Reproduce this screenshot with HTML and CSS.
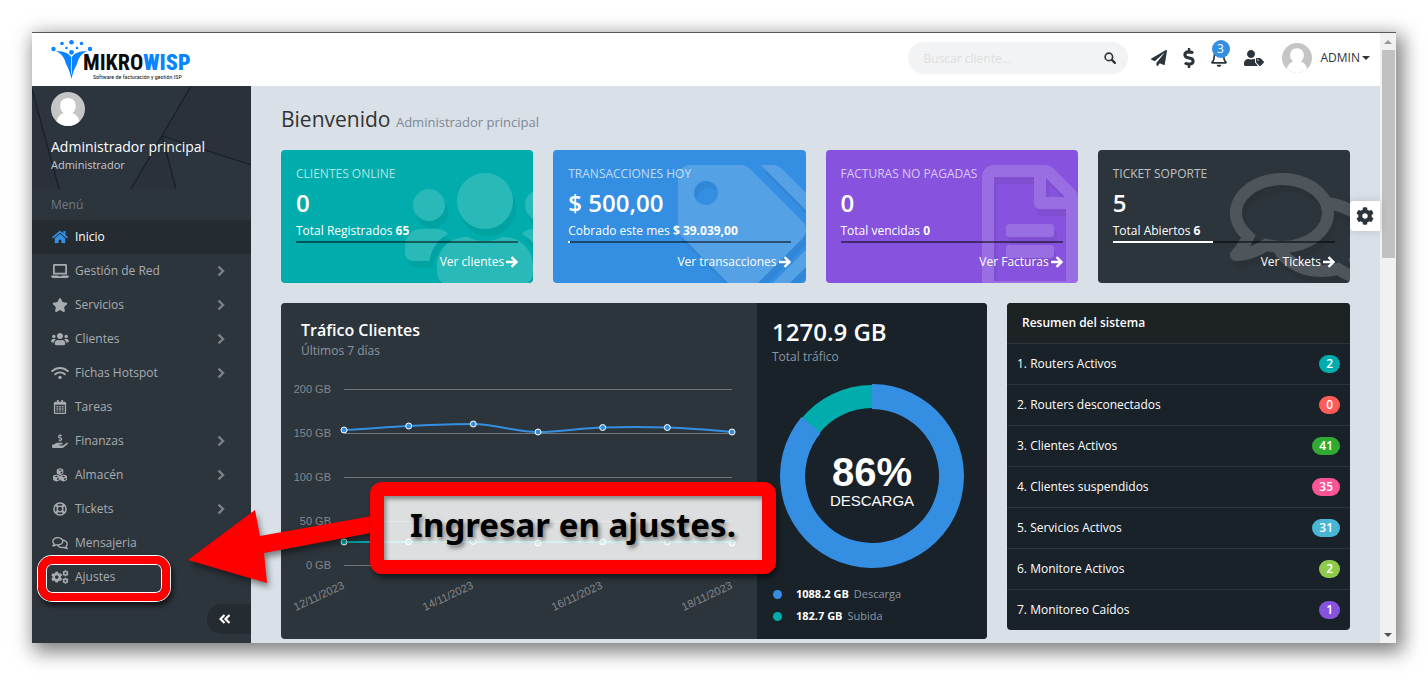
FILE: index.html
```html
<!DOCTYPE html>
<html lang="es">
<head>
<meta charset="utf-8">
<meta name="viewport" content="width=device-width, initial-scale=1">
<title>Mikrowisp</title>
<link rel="stylesheet" href="styles.css">
</head>
<body>
<svg class="sprite" aria-hidden="true">
  <symbol id="home" viewBox="0 0 576 512"><path d="M280.37 148.26L96 300.11V464a16 16 0 0 0 16 16l112.06-.29a16 16 0 0 0 15.92-16V368a16 16 0 0 1 16-16h64a16 16 0 0 1 16 16v95.64a16 16 0 0 0 16 16.05L464 480a16 16 0 0 0 16-16V300L295.67 148.26a12.19 12.19 0 0 0-15.3 0zM571.6 251.47L488 182.56V44.05a12 12 0 0 0-12-12h-56a12 12 0 0 0-12 12v72.61L318.47 43a48 48 0 0 0-61 0L4.34 251.47a12 12 0 0 0-1.6 16.9l25.5 31A12 12 0 0 0 45.15 301l235.22-193.74a12.19 12.19 0 0 1 15.3 0L530.9 301a12 12 0 0 0 16.9-1.6l25.5-31a12 12 0 0 0-1.7-16.93z"/></symbol>
  <symbol id="laptop" viewBox="0 0 640 512"><path d="M624 416H381.54c-.74 19.81-14.71 32-32.74 32H288c-18.69 0-33.02-17.47-32.77-32H16c-8.8 0-16 7.2-16 16v16c0 35.2 28.8 64 64 64h512c35.2 0 64-28.8 64-64v-16c0-8.8-7.2-16-16-16zM576 48c0-26.4-21.6-48-48-48H112C85.6 0 64 21.6 64 48v336h512V48zm-64 272H128V64h384v256z"/></symbol>
  <symbol id="star" viewBox="0 0 576 512"><path d="M259.3 17.8L194 150.2 47.9 171.5c-26.2 3.8-36.7 36.1-17.7 54.6l105.7 103-25 145.5c-4.5 26.3 23.2 46 46.4 33.7L288 439.6l130.7 68.7c23.2 12.2 50.9-7.4 46.4-33.7l-25-145.5 105.7-103c19-18.5 8.5-50.8-17.7-54.6L382 150.2 316.7 17.8c-11.7-23.6-45.6-23.9-57.4 0z"/></symbol>
  <symbol id="users" viewBox="0 0 640 512"><path d="M96 224c35.3 0 64-28.7 64-64s-28.7-64-64-64-64 28.7-64 64 28.7 64 64 64zm448 0c35.3 0 64-28.7 64-64s-28.7-64-64-64-64 28.7-64 64 28.7 64 64 64zm32 32h-64c-17.6 0-33.5 7.1-45.1 18.6 40.3 22.1 68.9 62 75.1 109.4h66c17.7 0 32-14.3 32-32v-32c0-35.3-28.7-64-64-64zm-256 0c61.9 0 112-50.1 112-112S381.9 32 320 32 208 82.1 208 144s50.1 112 112 112zm76.8 32h-8.3c-20.8 10-43.9 16-68.5 16s-47.6-6-68.5-16h-8.3C179.6 288 128 339.6 128 403.2V432c0 26.5 21.5 48 48 48h288c26.5 0 48-21.5 48-48v-28.8c0-63.6-51.6-115.2-115.2-115.2zm-223.7-13.4C161.5 263.1 145.6 256 128 256H64c-35.3 0-64 28.7-64 64v32c0 17.7 14.3 32 32 32h65.9c6.3-47.4 34.9-87.3 75.2-109.4z"/></symbol>
  <symbol id="wifi" viewBox="0 0 640 512"><g fill="none" stroke="currentColor" stroke-width="72" stroke-linecap="round"><path d="M36 186C200 32 440 32 604 186"/><path d="M142 302c102-92 254-92 356 0"/></g><circle cx="320" cy="416" r="62"/></symbol>
  <symbol id="calendar" viewBox="0 0 448 512"><path fill-rule="evenodd" d="M48 64h64V12q0-12 12-12h40q12 0 12 12v52h96V12q0-12 12-12h40q12 0 12 12v52h64q48 0 48 48v352q0 48-48 48H48q-48 0-48-48V112q0-48 48-48zm0 112v288h352V176z"/><path d="M96 220h64v56H96zM192 220h64v56h-64zM288 220h64v56h-64zM96 300h64v56H96zM192 300h64v56h-64zM288 300h64v56h-64zM96 380h64v44H96zM192 380h64v44h-64zM288 380h64v44h-64z"/></symbol>
  <symbol id="dollar" viewBox="0 0 288 512"><path d="M209.2 233.4l-108-31.6C88.7 198.2 80 186.5 80 173.5c0-16.3 13.2-29.5 29.5-29.5h66.3c12.2 0 24.2 3.7 34.2 10.5 6.1 4.1 14.3 3.1 19.5-2l34.8-34c7.1-6.9 6.1-18.4-1.8-24.5C238 74.8 207.4 64.1 176 64V16c0-8.8-7.2-16-16-16h-32c-8.8 0-16 7.2-16 16v48h-2.5C45.8 64-5.4 118.7.5 183.6c4.2 46.1 39.4 83.6 83.8 96.6l102.5 30c12.5 3.7 21.2 15.3 21.2 28.3 0 16.3-13.2 29.5-29.5 29.5h-66.3C100 368 88 364.3 78 357.5c-6.1-4.1-14.3-3.1-19.5 2l-34.8 34c-7.1 6.9-6.1 18.4 1.8 24.5 24.5 19.2 55.1 29.9 86.5 30v48c0 8.8 7.2 16 16 16h32c8.8 0 16-7.2 16-16v-48.2c46.6-.9 90.3-28.6 105.7-72.7 21.5-61.6-14.6-124.8-72.5-141.7z"/></symbol>
  <symbol id="hand" viewBox="0 0 576 512"><use href="#dollar" x="212" y="0" width="160" height="284"/><path d="M565.3 328.1c-11.8-10.7-30.2-10-42.6 0L430.3 402c-11.3 9.1-25.4 14-40 14H272c-8.8 0-16-7.2-16-16s7.2-16 16-16h78.3c15.9 0 30.7-10.9 33.3-26.6 3.3-20-12.1-37.4-31.6-37.4H192c-27 0-53.1 9.3-74.1 26.3L71.4 384H16c-8.8 0-16 7.2-16 16v96c0 8.8 7.2 16 16 16h356.8c14.5 0 28.6-4.9 40-14L564 377c15.2-12.1 16.4-35.3 1.3-48.9z"/></symbol>
  <symbol id="cube" viewBox="0 0 260 272"><path fill-rule="evenodd" d="M118 5q12-5 24 0l98 38q18 7 18 26v120q0 18-16 26l-98 49q-14 7-28 0l-98-49Q2 207 2 189V69q0-19 18-26zM130 50L60 76l70 28 70-28zm22 166l64-32v-58l-64 26z"/></symbol>
  <symbol id="cubes" viewBox="0 0 512 512"><use href="#cube" x="128" y="0" width="256" height="268"/><use href="#cube" x="0" y="236" width="256" height="268"/><use href="#cube" x="256" y="236" width="256" height="268"/></symbol>
  <symbol id="ring" viewBox="0 0 512 512"><g fill="none" stroke="currentColor"><circle cx="256" cy="256" r="220" stroke-width="56"/><circle cx="256" cy="256" r="104" stroke-width="52"/><path stroke-width="84" d="M100 100l78 78M412 100l-78 78M100 412l78-78M412 412l-78-78"/></g></symbol>
  <symbol id="comments" viewBox="0 0 576 512"><path d="M532 386.2c27.5-27.1 44-61.1 44-98.2 0-80-76.5-146.1-176.2-157.9C368.3 72.5 294.3 32 208 32 93.1 32 0 103.6 0 192c0 37 16.5 71 44 98.2-15.3 30.7-37.3 54.5-37.7 54.9-6.3 6.7-8.1 16.5-4.4 25 3.6 8.5 12 14 21.2 14 53.5 0 96.7-20.2 125.2-38.8 9.2 2.1 18.7 3.7 28.4 4.9C208.1 407.6 281.8 448 368 448c20.8 0 40.8-2.4 59.8-6.8C456.3 459.7 499.4 480 553 480c9.2 0 17.5-5.5 21.2-14 3.6-8.5 1.9-18.3-4.4-25-.4-.3-22.5-24.1-37.8-54.8zm-392.8-92.3L122.1 305c-14.1 9.1-28.5 16.3-43.1 21.4 2.7-4.7 5.4-9.7 8-14.8l15.5-31.1L77.7 256C64.2 242.6 48 220.7 48 192c0-60.7 73.3-112 160-112s160 51.3 160 112-73.3 112-160 112c-16.5 0-33-1.9-49-5.6l-19.8-4.5zM498.3 352l-24.7 24.4 15.5 31.1c2.6 5.1 5.3 10.1 8 14.8-14.6-5.1-29-12.3-43.1-21.4l-17.1-11.1-19.9 4.6c-16 3.7-32.5 5.6-49 5.6-54 0-102.2-20.1-131.3-49.7C338 339.5 416 272.9 416 192c0-3.4-.4-6.7-.7-10C479.7 196.5 528 238.8 528 288c0 28.7-16.2 50.6-29.7 64z"/></symbol>
  <symbol id="cog" viewBox="0 0 512 512"><path d="M487.4 315.7l-42.6-24.6c4.3-23.2 4.3-47 0-70.2l42.6-24.6c4.9-2.8 7.1-8.6 5.5-14-11.1-35.6-30-67.8-54.7-94.6-3.8-4.1-10-5.1-14.8-2.3L380.8 110c-17.9-15.4-38.5-27.3-60.8-35.1V25.8c0-5.6-3.9-10.5-9.4-11.7-36.7-8.2-74.3-7.8-109.2 0-5.5 1.2-9.4 6.1-9.4 11.7V75c-22.2 7.9-42.8 19.8-60.8 35.1L88.7 85.5c-4.9-2.8-11-1.9-14.8 2.3-24.7 26.7-43.6 58.9-54.7 94.6-1.7 5.4.6 11.2 5.5 14L67.3 221c-4.3 23.2-4.3 47 0 70.2l-42.6 24.6c-4.9 2.8-7.1 8.6-5.5 14 11.1 35.6 30 67.8 54.7 94.6 3.8 4.1 10 5.1 14.8 2.3l42.6-24.6c17.9 15.4 38.5 27.3 60.8 35.1v49.2c0 5.6 3.9 10.5 9.4 11.7 36.7 8.2 74.3 7.8 109.2 0 5.5-1.2 9.4-6.1 9.4-11.7v-49.2c22.2-7.9 42.8-19.8 60.8-35.1l42.6 24.6c4.9 2.8 11 1.9 14.8-2.3 24.7-26.7 43.6-58.9 54.7-94.6 1.5-5.5-.7-11.3-5.6-14.1zM256 336c-44.1 0-80-35.9-80-80s35.9-80 80-80 80 35.9 80 80-35.9 80-80 80z"/></symbol>
  <symbol id="cogs" viewBox="0 0 640 512"><use href="#cog" x="-10" y="50" width="420" height="420"/><use href="#cog" x="400" y="0" width="240" height="240"/><use href="#cog" x="400" y="270" width="240" height="240"/></symbol>
  <symbol id="plane" viewBox="0 0 512 512"><path d="M476 3.2L12.5 270.6c-18.1 10.4-15.8 35.6 2.2 43.2L121 358.4l287.3-253.2c5.5-4.9 13.3 2.6 8.6 8.3L176 407v80.5c0 23.6 28.5 32.9 42.5 15.8L282 426l124.6 52.2c14.2 6 30.4-2.9 33-18.2l72-432C515 7.8 493.3-6.8 476 3.2z"/></symbol>
  <symbol id="bell" viewBox="0 0 448 512"><path d="M439.39 362.29c-19.32-20.76-55.47-51.99-55.47-154.29 0-77.7-54.48-139.9-127.94-155.16V32c0-17.67-14.32-32-31.98-32s-31.98 14.33-31.98 32v20.84C118.56 68.1 64.08 130.3 64.08 208c0 102.3-36.15 133.53-55.47 154.29-6 6.45-8.66 14.16-8.61 21.71.11 16.4 12.98 32 32.1 32h383.8c19.12 0 32-15.6 32.1-32 .05-7.55-2.61-15.27-8.61-21.71zM67.53 368c21.22-27.97 44.42-74.33 44.53-159.42 0-.2-.06-.38-.06-.58 0-61.86 50.14-112 112-112s112 50.14 112 112c0 .2-.06.38-.06.58.11 85.1 23.31 131.46 44.53 159.42H67.53zM224 512c35.32 0 63.97-28.65 63.97-64H160.03c0 35.35 28.65 64 63.97 64z"/></symbol>
  <symbol id="usertag" viewBox="0 0 640 512"><path d="M630.6 364.9l-90.3-90.2c-12-12-28.3-18.7-45.3-18.7h-79.3c-17.7 0-32 14.3-32 32v79.2c0 17 6.7 33.2 18.7 45.2l90.3 90.2c12.5 12.5 32.8 12.5 45.3 0l92.5-92.5c12.6-12.5 12.6-32.7.1-45.2zm-182.8-21c-13.3 0-24-10.7-24-24s10.7-24 24-24 24 10.7 24 24c0 13.2-10.7 24-24 24zm-223.8-88c70.7 0 128-57.3 128-128C352 57.3 294.7 0 224 0S96 57.3 96 128c0 70.6 57.3 127.9 128 127.9zm127.8 111.2V294c-12.2-3.6-24.9-6.2-38.2-6.2h-16.7c-22.2 10.2-46.9 16-72.9 16s-50.6-5.8-72.9-16h-16.7C60.2 287.9 0 348.1 0 422.3v41.6c0 26.5 21.5 48 48 48h352c15.5 0 29.1-7.5 37.9-18.9l-58-58c-18.1-18.1-28.1-42.2-28.1-67.9z"/></symbol>
  <symbol id="tags" viewBox="0 0 640 512"><path d="M497.941 225.941L286.059 14.059A48 48 0 0 0 252.118 0H48C21.49 0 0 21.49 0 48v204.118a48 48 0 0 0 14.059 33.941l211.882 211.882c18.744 18.745 49.136 18.746 67.882 0l204.118-204.118c18.745-18.745 18.745-49.137 0-67.882zM112 160c-26.51 0-48-21.49-48-48s21.49-48 48-48 48 21.49 48 48-21.49 48-48 48zm513.941 133.823L421.823 497.941c-18.745 18.745-49.137 18.745-67.882 0l-.36-.36L527.64 323.522c16.999-16.999 26.36-39.6 26.36-63.64s-9.362-46.641-26.36-63.64L331.397 0h48.721a48 48 0 0 1 33.941 14.059l211.882 211.882c18.745 18.745 18.745 49.137 0 67.882z"/></symbol>
  <symbol id="file" viewBox="0 0 384 512"><path d="M288 248v28c0 6.600-5.400 12-12 12H108c-6.600 0-12-5.400-12-12v-28c0-6.600 5.400-12 12-12h168c6.600 0 12 5.400 12 12zm-12 72H108c-6.600 0-12 5.400-12 12v28c0 6.600 5.400 12 12 12h168c6.600 0 12-5.400 12-12v-28c0-6.600-5.400-12-12-12zm108-188.100V464c0 26.500-21.500 48-48 48H48c-26.500 0-48-21.500-48-48V48C0 21.500 21.500 0 48 0h204.100C264.800 0 277 5.100 286 14.100L369.900 98c9 8.900 14.100 21.200 14.100 33.900zm-128-80V128h76.100L256 51.900zM336 464V176H232c-13.300 0-24-10.700-24-24V48H48v416h288z"/></symbol>
  <symbol id="search" viewBox="0 0 16 16"><g fill="none" stroke="currentColor" stroke-width="2.200"><circle cx="6.500" cy="6.500" r="5"/><path stroke-width="3" stroke-linecap="round" d="M10.500 10.500l4 4"/></g></symbol>
  <symbol id="chevron" viewBox="0 0 8 12"><path fill="none" stroke="currentColor" stroke-width="2.400" d="M1.500 1.500L6 6l-4.500 4.500"/></symbol>
  <symbol id="arrow" viewBox="0 0 12 12"><path fill="none" stroke="currentColor" stroke-width="2.400" d="M0 6h10.500M5.500 1.200L10.500 6l-5 4.800"/></symbol>
  <symbol id="rewind" viewBox="0 0 12 10"><path fill="none" stroke="currentColor" stroke-width="2.200" d="M5.500 1l-4 4 4 4M10.500 1l-4 4 4 4"/></symbol>
  <symbol id="avatar" viewBox="0 0 34 34"><clipPath id="round"><circle cx="17" cy="17" r="17"/></clipPath><g clip-path="url(#round)"><path fill="#c5c5c5" d="M0 0h34v34H0z"/><path fill="#fff" d="M17 6c5 0 7.800 3.600 7.800 8 0 3-1.400 5.400-3.400 7 4.600 1.600 7.600 6 7.600 13H5c0-7 3-11.400 7.600-13-2-1.600-3.400-4-3.400-7 0-4.400 2.800-8 7.800-8z"/></g></symbol>
</svg>

<div class="window">
  <div class="app">
    <header class="topbar">
      <a class="brand" href="#">
        <svg class="brand-mark" viewBox="0 0 42 40" aria-hidden="true"><circle cx="2.500" cy="9" r="2.200"/><circle cx="11" cy="3.500" r="1.800"/><circle cx="20.500" cy="2.300" r="2.300"/><circle cx="30.500" cy="3.500" r="1.800"/><circle cx="39" cy="9" r="2.200"/><circle cx="15.500" cy="8" r="1.300"/><circle cx="26" cy="8" r="1.300"/><circle cx="20.500" cy="12.300" r="2.400"/><path d="M5 11c9 0 14 3 15.500 7 1.500-4 6.500-7 15.500-7-6 3-8.500 7-10 13-2.500 5-4 8-5.500 15-1.500-7-3-10-5.500-15C13.500 18 11 14 5 11z"/><path fill="#fff" d="M20.200 18h.7v16h-.7z"/></svg>
        <span class="brand-text"><span class="brand-name">MIKRO<b>WISP</b></span><span class="brand-tag">Software de facturación y gestión ISP</span></span>
      </a>
      <form class="search">
        <input type="text" placeholder="Buscar cliente..." aria-label="Buscar cliente">
        <button type="button" aria-label="Buscar"><svg><use href="#search"/></svg></button>
      </form>
      <nav class="tools" aria-label="Accesos">
        <button type="button" aria-label="Enviar"><svg class="t-plane"><use href="#plane"/></svg></button>
        <button type="button" aria-label="Pagos"><svg class="t-dollar"><use href="#dollar"/></svg></button>
        <button type="button" aria-label="Avisos"><svg class="t-bell"><use href="#bell"/></svg><span class="count">3</span></button>
        <button type="button" aria-label="Clientes"><svg class="t-user"><use href="#usertag"/></svg></button>
        <button type="button" class="account"><svg class="t-avatar"><use href="#avatar"/></svg><span>ADMIN</span><i class="caret"></i></button>
      </nav>
    </header>

    <div class="body">
      <aside class="sidebar">
        <div class="profile">
          <svg class="facets" viewBox="0 0 219 103" preserveAspectRatio="none" aria-hidden="true"><path fill="#29313a" opacity=".6" d="M0 0l28 103H0zM130 50l14 53H99zM219 0v78l-89-28L159 0z"/><g fill="none" stroke="#171f28" stroke-width="1.200"><path d="M0 3l27 100M159 0l-60 103M130 50l89 29M130 50l14 53"/></g></svg>
          <svg class="photo"><use href="#avatar"/></svg>
          <strong>Administrador principal</strong>
          <small>Administrador</small>
        </div>
        <div class="menu-title">Menú</div>
        <ul class="menu">
          <li class="active"><a href="#"><svg><use href="#home"/></svg>Inicio</a></li>
          <li><a href="#"><svg><use href="#laptop"/></svg>Gestión de Red<svg class="more"><use href="#chevron"/></svg></a></li>
          <li><a href="#"><svg><use href="#star"/></svg>Servicios<svg class="more"><use href="#chevron"/></svg></a></li>
          <li><a href="#"><svg><use href="#users"/></svg>Clientes<svg class="more"><use href="#chevron"/></svg></a></li>
          <li><a href="#"><svg><use href="#wifi"/></svg>Fichas Hotspot<svg class="more"><use href="#chevron"/></svg></a></li>
          <li><a href="#"><svg><use href="#calendar"/></svg>Tareas</a></li>
          <li><a href="#"><svg><use href="#hand"/></svg>Finanzas<svg class="more"><use href="#chevron"/></svg></a></li>
          <li><a href="#"><svg><use href="#cubes"/></svg>Almacén<svg class="more"><use href="#chevron"/></svg></a></li>
          <li><a href="#"><svg><use href="#ring"/></svg>Tickets<svg class="more"><use href="#chevron"/></svg></a></li>
          <li><a href="#"><svg><use href="#comments"/></svg>Mensajeria</a></li>
          <li class="marked"><a href="#"><svg><use href="#cogs"/></svg>Ajustes</a></li>
        </ul>
        <button type="button" class="collapse" aria-label="Contraer menú"><svg><use href="#rewind"/></svg></button>
      </aside>

      <main class="content">
        <h1>Bienvenido <small>Administrador principal</small></h1>

        <section class="cards">
          <article class="card teal">
            <svg class="deco wide"><use href="#users"/></svg>
            <h2>CLIENTES ONLINE</h2><p class="value">0</p><p class="total">Total Registrados <b>65</b></p>
            <div class="bar"></div>
            <a href="#">Ver clientes <svg><use href="#arrow"/></svg></a>
          </article>
          <article class="card blue">
            <svg class="deco wide"><use href="#tags"/></svg>
            <h2>TRANSACCIONES HOY</h2><p class="value">$ 500,00</p><p class="total">Cobrado este mes <b>$ 39.039,00</b></p>
            <div class="bar"><span style="width:1%"></span></div>
            <a href="#">Ver transacciones <svg><use href="#arrow"/></svg></a>
          </article>
          <article class="card purple">
            <svg class="deco slim"><use href="#file"/></svg>
            <h2>FACTURAS NO PAGADAS</h2><p class="value">0</p><p class="total">Total vencidas <b>0</b></p>
            <div class="bar"></div>
            <a href="#">Ver Facturas <svg><use href="#arrow"/></svg></a>
          </article>
          <article class="card dark">
            <svg class="deco mid"><use href="#comments"/></svg>
            <h2>TICKET SOPORTE</h2><p class="value">5</p><p class="total">Total Abiertos <b>6</b></p>
            <div class="bar"><span style="width:45%"></span></div>
            <a href="#">Ver Tickets <svg><use href="#arrow"/></svg></a>
          </article>
        </section>

        <section class="panels">
          <article class="traffic">
            <div class="chart">
              <h3>Tráfico Clientes</h3>
              <p>Últimos 7 días</p>
              <svg class="lines" viewBox="0 0 476 262" role="img" aria-label="Tráfico de los últimos 7 días">
                <path fill="none" stroke="#727679" d="M63 26.500h388M63 70.500h388M63 114.500h388M63 158.500h388M63 202.500h388"/>
                <g class="axis" text-anchor="end">
                  <text x="50" y="30">200 GB</text><text x="50" y="74">150 GB</text><text x="50" y="118">100 GB</text><text x="50" y="162">50 GB</text><text x="50" y="206">0 GB</text>
                  <text transform="translate(64 225) rotate(-25)">12/11/2023</text><text transform="translate(193 225) rotate(-25)">14/11/2023</text><text transform="translate(322 225) rotate(-25)">16/11/2023</text><text transform="translate(452 225) rotate(-25)">18/11/2023</text>
                </g>
                <path fill="none" stroke="#348fe2" stroke-width="2" d="M63 67C85 66 106 64 127.700 63S171 61 192.300 61 235 69 257 69 300 65 321.700 64.500 365 64 386.300 64.500 430 67 451 69"/>
                <path fill="none" stroke="#00acac" stroke-width="2" d="M63 179h388"/>
                <g fill="#348fe2" class="dots"><circle cx="63" cy="67" r="3"/><circle cx="127.700" cy="63" r="3"/><circle cx="192.300" cy="61" r="3"/><circle cx="257" cy="69" r="3"/><circle cx="321.700" cy="64.500" r="3"/><circle cx="386.300" cy="64.500" r="3"/><circle cx="451" cy="69" r="3"/></g>
                <g fill="#00acac" class="dots"><circle cx="63" cy="179" r="3"/><circle cx="127.700" cy="179" r="3"/><circle cx="192.300" cy="178.500" r="3"/><circle cx="257" cy="180" r="3"/><circle cx="321.700" cy="179" r="3"/><circle cx="386.300" cy="179" r="3"/><circle cx="451" cy="180" r="3"/></g>
              </svg>
            </div>
            <div class="share">
              <h3>1270.9 GB</h3>
              <p>Total tráfico</p>
              <svg class="donut" viewBox="0 0 184 184" role="img" aria-label="86% descarga">
                <path fill="#00acac" d="M92 1A91 91 0 0 0 20.200 36.100L38.400 50.200A68 68 0 0 1 92 24z"/>
                <path fill="#348fe2" d="M92 0A92 92 0 1 1 21.500 32.900L40.700 49A67 67 0 1 0 92 25z"/>
                <text class="pct" x="92" y="102">86%</text>
                <text class="cap" x="92" y="122">DESCARGA</text>
              </svg>
              <ul>
                <li><b>1088.2 GB</b> Descarga</li>
                <li class="up"><b>182.7 GB</b> Subida</li>
              </ul>
            </div>
          </article>

          <article class="summary">
            <h3>Resumen del sistema</h3>
            <ul>
              <li>1. Routers Activos<span class="b-teal">2</span></li>
              <li>2. Routers desconectados<span class="b-red">0</span></li>
              <li>3. Clientes Activos<span class="b-green">41</span></li>
              <li>4. Clientes suspendidos<span class="b-pink">35</span></li>
              <li>5. Servicios Activos<span class="b-aqua">31</span></li>
              <li>6. Monitore Activos<span class="b-lime">2</span></li>
              <li>7. Monitoreo Caídos<span class="b-purple">1</span></li>
            </ul>
          </article>
        </section>

        <button type="button" class="settings" aria-label="Configuración"><svg><use href="#cog"/></svg></button>
      </main>
    </div>
  </div>

  <div class="scrollbar" aria-hidden="true"><i class="up"></i><div class="track"><div class="thumb"></div></div><i class="down"></i></div>

  <svg class="pointer" viewBox="0 0 190 80" aria-hidden="true"><path fill="#f00" d="M0 50l67-50 5 26 112-20 4 16-112 21 3 30z"/></svg>
  <div class="callout">Ingresar en ajustes.</div>
</div>
</body>
</html>
```

FILE: styles.css
```css
*, *::before, *::after { box-sizing: border-box; }
body { margin: 0; padding: 32px 32px 43px; background: #fff; font: 12px/18px "Open Sans", "Noto Sans", sans-serif; color: #2d353c; }
h1, h2, h3, p, ul { margin: 0; padding: 0; font-weight: 400; }
ul { list-style: none; }
a { color: inherit; text-decoration: none; }
button { border: 0; padding: 0; background: none; font: inherit; color: inherit; }
svg { fill: currentColor; display: block; flex: none; }
.sprite { position: absolute; width: 0; height: 0; }

.window { position: relative; display: flex; border-top: 1px solid #58595b; box-shadow: 4px 6px 18px 3px rgba(0, 0, 0, .5); }
.app { flex: 1; min-width: 0; display: flex; flex-direction: column; }

.topbar { display: flex; align-items: center; height: 53px; padding: 0 10px 3px 19px; background: #fff; }
.brand { display: flex; margin: 4px auto 0 0; }
.brand-mark { width: 42px; height: 40px; color: #0a84ff; }
.brand-text { display: flex; flex-direction: column; margin-left: -10px; padding-top: 13px; }
.brand-name { font: 700 22px/20px "Liberation Sans Narrow", "Roboto Condensed", Roboto, sans-serif; color: #0b0b0b; }
.brand-name b { color: #0a84ff; }
.brand-tag { padding-left: 10px; font: 6px/8px "Liberation Sans Narrow", "Roboto Condensed", Roboto, sans-serif; color: #111; }
.search { position: relative; width: 220px; margin-right: 22px; }
.search input { width: 100%; height: 32px; border: 0; border-radius: 16px; padding: 0 40px 0 16px; background: #f2f3f4; font: inherit; }
.search input::placeholder { color: #dcdee0; opacity: 1; }
.search button { position: absolute; right: 12px; top: 10px; }
.search button svg { width: 12px; height: 12px; }
.tools { display: flex; align-items: center; gap: 14px; }
.tools button { position: relative; display: flex; justify-content: center; }
.t-plane { width: 18px; height: 16px; }
.t-dollar { width: 14px; height: 20px; }
.t-bell { width: 18px; height: 18px; }
.t-user { width: 24px; height: 16px; }
.t-avatar { width: 30px; height: 30px; }
.count { position: absolute; left: 2px; top: -9px; width: 18px; height: 18px; border-radius: 9px; background: #348fe2; color: #fff; font-size: 12px; line-height: 18px; text-align: center; }
.tools .account { align-items: center; margin-left: 2px; }
.account span { margin-left: 9px; }
.caret { margin-left: 2px; border: 4px solid transparent; border-top-color: #2d353c; border-bottom: 0; }

.body { flex: 1; display: flex; }
.sidebar { width: 219px; flex: none; display: flex; flex-direction: column; background: #2d353c; color: #a8acb1; }
.profile { position: relative; height: 103px; padding: 6px 19px; background: #2c343d; }
.facets { position: absolute; inset: 0; width: 100%; height: 100%; }
.photo { position: relative; width: 34px; height: 34px; }
.profile strong, .profile small { position: relative; display: block; }
.profile strong { margin-top: 11px; font-size: 14px; font-weight: 400; line-height: 20px; color: #fff; white-space: nowrap; }
.profile small { font-size: 11px; line-height: 16px; color: #c6c9cc; }
.menu-title { padding: 7px 19px 6px; color: #6f7983; }
.menu a { position: relative; display: flex; align-items: center; gap: 6px; height: 34px; padding: 0 26px 0 19px; font-size: 12px; }
.menu a svg { width: 18px; height: 14px; }
.menu a .more { width: 8px; height: 12px; margin-left: auto; color: #7b8187; }
.menu .active a { background: #242b31; color: #fff; }
.menu .active svg { color: #348fe2; }
.marked { position: relative; }
.marked::after { content: ""; position: absolute; left: 6px; top: -4px; width: 132px; height: 45px; border: 8px solid #f00; border-radius: 14px; box-shadow: 0 0 0 1px #fff, inset 0 0 0 1px #fff, 2px 4px 5px 1px rgba(0, 0, 0, .6); }
.collapse { align-self: flex-end; display: flex; align-items: center; width: 44px; height: 30px; margin: 10px 0 9px; padding-left: 12px; border-radius: 15px 0 0 15px; background: #242b31; color: #fff; }
.collapse svg { width: 12px; height: 10px; }

.content { position: relative; flex: 1; min-width: 0; padding: 18px 30px 4px; background: #d9e0e7; }
h1 { margin-bottom: 16px; font-size: 21px; line-height: 30px; color: #333; }
h1 small { font-size: 13px; line-height: 18px; color: #7c8896; }
.cards { display: grid; grid-template-columns: repeat(4, 1fr); gap: 20px; }
.card { position: relative; overflow: hidden; display: flex; flex-direction: column; padding: 15px 15px 12px; border-radius: 4px; color: #fff; }
.teal { background: #00acac; }
.blue { background: #348fe2; }
.purple { background: #8753de; }
.dark { background: #2d353c; }
.deco { position: absolute; top: 15px; height: 128px; overflow: visible; opacity: .16; filter: drop-shadow(3px 7px 0 rgba(0, 0, 0, .35)); }
.wide { width: 160px; right: -32px; }
.mid { width: 144px; right: -24px; }
.slim { width: 96px; right: 0; }
.card h2 { position: relative; font-size: 12px; line-height: 18px; color: rgba(255, 255, 255, .7); }
.value { position: relative; margin: 5px 0 4px; font-size: 24px; line-height: 30px; font-weight: 600; }
.total { position: relative; line-height: 18px; }
.bar { position: relative; height: 2px; margin: 1px 0 10px; background: rgba(0, 0, 0, .5); }
.bar span { display: block; height: 2px; background: #fff; }
.card a { position: relative; display: flex; align-items: center; gap: 2px; align-self: flex-end; }
.card a svg { width: 12px; height: 12px; }

.panels { display: grid; grid-template-columns: 706fr 343fr; align-items: start; gap: 20px; margin-top: 20px; }
.traffic { display: flex; border-radius: 4px; overflow: hidden; background: #2d353c; }
.chart { flex: 1; min-width: 0; padding-top: 17px; }
.chart h3 { padding-left: 20px; font-size: 16px; line-height: 20px; font-weight: 600; color: #fff; }
.chart p { padding-left: 20px; margin-top: 2px; color: #8a97a3; }
.lines { width: 100%; height: auto; margin-top: 3px; }
.axis { font: 11px "Liberation Sans", Arial, sans-serif; fill: #85888b; }
.dots { stroke: #fff; stroke-width: 1px; }
.share { width: 230px; flex: none; padding: 14px 15px 12px; background: #1a2229; color: #8a97a3; }
.share h3 { font-size: 24px; line-height: 30px; font-weight: 600; color: #fff; }
.share p { margin-top: 1px; }
.donut { width: 184px; height: 184px; margin: 18px 0 15px 8px; fill: #fff; }
.donut text { text-anchor: middle; font-family: "Liberation Sans", Arial, sans-serif; }
.donut .pct { font-size: 40px; font-weight: 700; }
.donut .cap { font-size: 15px; }
.share li { display: flex; align-items: center; gap: 5px; height: 22px; font-size: 11px; }
.share li::before { content: ""; width: 9px; height: 9px; margin: 0 9px 0 1px; border-radius: 50%; background: #348fe2; }
.share li.up::before { background: #00acac; }
.share li b { color: #fff; }
.summary { border-radius: 4px; overflow: hidden; background: #1a2229; color: #fff; }
.summary h3 { padding: 11px 15px; background: #1d2225; font-size: 12px; line-height: 18px; font-weight: 600; }
.summary li { display: flex; align-items: center; justify-content: space-between; height: 41px; padding: 0 10px; border-top: 1px solid #2d353c; }
.summary li span { padding: 0 7px; border-radius: 9px; font-weight: 600; }
.b-teal { background: #00acac; }
.b-red { background: #ff5b57; }
.b-green { background: #32a932; }
.b-pink { background: #fb5597; }
.b-aqua { background: #49b6d6; }
.b-lime { background: #90ca4b; }
.b-purple { background: #8753de; }
.settings { position: absolute; right: 0; top: 115px; display: flex; align-items: center; justify-content: center; width: 30px; height: 30px; border-radius: 4px 0 0 4px; background: #fff; box-shadow: 0 0 10px rgba(0, 0, 0, .15); }
.settings svg { width: 18px; height: 18px; }

.scrollbar { flex: none; display: flex; flex-direction: column; align-items: center; justify-content: space-between; width: 16px; padding: 7px 0 6px; background: #f1f1f1; }
.track { flex: 1; width: 13px; padding: 6px 0; }
.thumb { height: 36%; background: #c1c1c1; }
.scrollbar i { border: 4px solid transparent; }
.scrollbar .up { border-top: 0; border-bottom-color: #9a9a9a; }
.scrollbar .down { border-bottom: 0; border-top-color: #505050; }

.pointer { position: absolute; left: 156px; top: 477px; width: 190px; height: 80px; overflow: visible; filter: drop-shadow(2px 4px 3px rgba(0, 0, 0, .45)); }
.callout { position: absolute; left: 338px; top: 449px; width: 406px; height: 92px; border: 14px solid #f00; border-radius: 12px; background: rgba(255, 255, 255, .84); background-clip: padding-box; box-shadow: 2px 4px 5px rgba(0, 0, 0, .5), inset 2px 3px 4px rgba(0, 0, 0, .4); color: #000; font: 700 33px/58px "Noto Sans", sans-serif; text-align: center; text-shadow: 2px 3px 4px rgba(0, 0, 0, .45); white-space: nowrap; }
```
